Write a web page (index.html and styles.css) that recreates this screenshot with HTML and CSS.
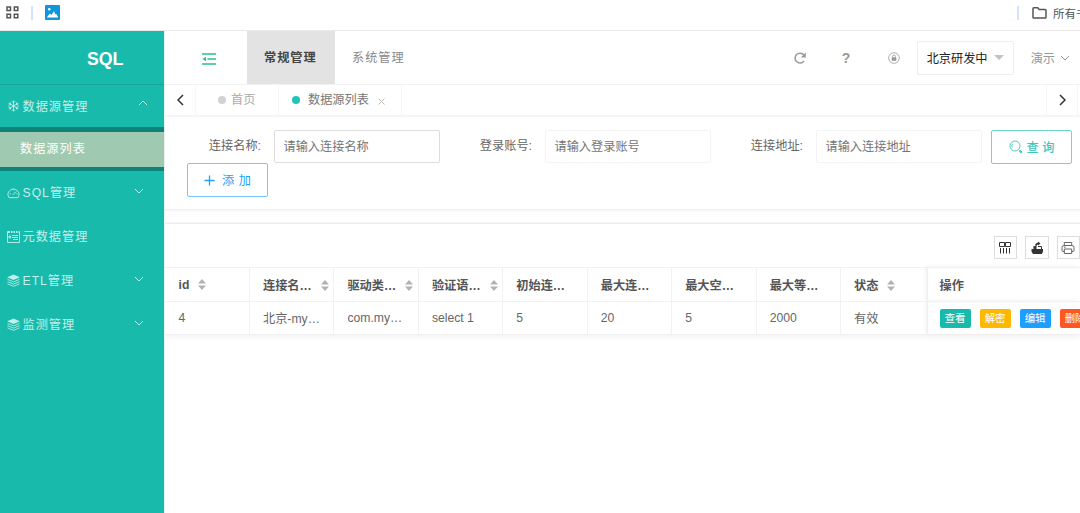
FILE: index.html
```html
<!DOCTYPE html>
<html lang="zh">
  <head>
    <meta charset="utf-8">
    <title>SQL</title>
    <link rel="stylesheet" href="styles.css">
  </head>
  <body>
    <svg class="defs" width="0" height="0">
      <symbol id="up" viewBox="0 0 10 6"><path d="M1 5l4-4 4 4"/></symbol>
      <symbol id="down" viewBox="0 0 10 6"><path d="M1 1l4 4 4-4"/></symbol>
      <symbol id="layers" viewBox="0 0 14 14"><path class="fill" d="M7 .5l6.800 3L7 6.500.2 3.500z"/><path d="M.5 5.800L7 8.500l6.500-2.700M.5 8.200L7 10.900l6.500-2.700M.5 10.600L7 13.300l6.500-2.700"/></symbol>
      <symbol id="sort" viewBox="0 0 8 11"><path class="fill" d="M0 4.500L4 0l4 4.500zM0 6.500h8L4 11z"/></symbol>
    </svg>

    <div class="bookmarks">
      <svg class="apps" width="13" height="13" viewBox="0 0 13 13"><path d="M1 1h3.500v3.500H1zM8.300 1h3.500v3.500H8.300zM1 8.300h3.500v3.500H1zM8.300 8.300h3.500v3.500H8.300z"/></svg>
      <i class="bar"></i>
      <svg class="photo" width="15" height="15" viewBox="0 0 15 15"><rect width="15" height="15" rx="1" fill="#1296db"/><path fill="#fff" d="M1.800 12.500l3-4 1.600 1.400L9 6.300l1.500 3.200 1-.5 1.700 3.500zM3 4.300a1.300 1.300 0 1 1 2.600 0a1.300 1.300 0 1 1-2.600 0"/></svg>
      <i class="bar right"></i>
      <svg class="folder" width="15" height="12" viewBox="0 0 15 12"><path d="M1 1.500q0-.7.700-.7h4l1.500 1.700h6q.8 0 .8.800v7q0 .8-.8.800H1.800q-.8 0-.8-.8z"/></svg>
      <span>所有书签</span>
    </div>

    <div class="app">
      <div class="side">
        <div class="logo">SQL</div>
        <div class="item first">
          <svg width="12" height="12" viewBox="0 0 12 12"><path d="M6 .5v11M1.200 3.200l9.600 5.600M1.200 8.800l9.600-5.600M4.300 1.200L6 2.900l1.700-1.700M4.300 10.800L6 9.100l1.700 1.700M1 5.200l2.200-.6-.5-2.200M11 5.200l-2.200-.6.500-2.200M1 6.800l2.200.6-.5 2.200M11 6.800l-2.200.6.5 2.200"/></svg>
          <span>数据源管理</span>
          <svg class="arrow" width="10" height="6"><use href="#up"/></svg>
        </div>
        <div class="sub"><div class="active">数据源列表</div></div>
        <div class="item">
          <svg width="12" height="12" viewBox="0 0 12 12"><path d="M1.600 10.700A5.400 5.400 0 1 1 10.400 10.700zM5.500 7.700l2.800-3M2.300 6.800h1M8.800 6.800h1M6 2.500v.8"/></svg>
          <span>SQL管理</span>
          <svg class="arrow" width="10" height="6"><use href="#down"/></svg>
        </div>
        <div class="item">
          <svg width="13" height="13" viewBox="0 0 13 13"><path d="M.5 1.500v11h12v-11M5 5.500h6M5 7.500h6M6 9.500h5M2 6v2h1.500V6z"/><path class="thick" d="M.5 2h2.300M4 2h1.500M6.500 2H8M9 2h1.500M11.500 2h1"/></svg>
          <span>元数据管理</span>
        </div>
        <div class="item">
          <svg width="13" height="13"><use href="#layers"/></svg>
          <span>ETL管理</span>
          <svg class="arrow" width="10" height="6"><use href="#down"/></svg>
        </div>
        <div class="item">
          <svg width="13" height="13"><use href="#layers"/></svg>
          <span>监测管理</span>
          <svg class="arrow" width="10" height="6"><use href="#down"/></svg>
        </div>
      </div>

      <div class="main">
        <div class="header">
          <svg class="fold" width="14" height="12" viewBox="0 0 14 12"><path d="M0 1h14M5.500 6H14M0 11h14"/><path class="fill" d="M.5 6L4 3.800v4.400z"/></svg>
          <div class="nav on">常规管理</div>
          <div class="nav">系统管理</div>
          <div class="tools">
            <svg class="refresh" width="12" height="12" viewBox="0 0 12 12"><path d="M10 8.800A4.900 4.900 0 1 1 9.800 3"/><path class="fill" d="M11.800.5v5H6.800z"/></svg>
            <b class="help">?</b>
            <svg class="lock" width="12" height="12" viewBox="0 0 12 12"><circle cx="6" cy="6" r="5.300"/><path d="M4.600 5.500V4.400a1.400 1.400 0 0 1 2.800 0v1.100"/><path class="fill" d="M3.700 5.200h4.600v3.600H3.700z"/></svg>
            <div class="select"><span>北京研发中</span><i></i></div>
            <span class="user">演示</span>
            <svg class="userdown" width="10" height="6"><use href="#down"/></svg>
          </div>
        </div>

        <div class="tabs">
          <div class="ctrl"><svg width="7" height="12" viewBox="0 0 7 12"><path d="M6 1L1 6l5 5"/></svg></div>
          <div class="tab home"><i></i>首页</div>
          <div class="tab cur"><i></i>数据源列表<svg width="7" height="7" viewBox="0 0 7 7"><path d="M.5.5l6 6M6.500.5l-6 6"/></svg></div>
          <div class="ctrl next"><svg width="7" height="12" viewBox="0 0 7 12"><path d="M1 1l5 5-5 5"/></svg></div>
        </div>

        <div class="card search">
          <div class="row">
            <label>连接名称:</label><input class="focus" type="text" placeholder="请输入连接名称">
            <label>登录账号:</label><input type="text" placeholder="请输入登录账号">
            <label>连接地址:</label><input type="text" placeholder="请输入连接地址">
            <button class="btn query"><svg width="14" height="14" viewBox="0 0 14 14"><circle cx="6" cy="6" r="5"/><path d="M3.400 7.500a3 3 0 0 1 .5-4M9.600 9.600l.8.800"/><path class="thick" d="M10.500 10.500l2.300 2.300"/></svg>查 询</button>
          </div>
          <button class="btn add"><svg width="11" height="11" viewBox="0 0 11 11"><path d="M5.500.5v10M.5 5.500h10"/></svg>添 加</button>
        </div>

        <div class="card list">
          <div class="toolbar">
            <div><svg width="14" height="14" viewBox="0 0 14 14"><path d="M1.500 1.500h5v4h-5zM7.500 1.500h5v4h-5zM2.500 7v5.500M5.500 7v5.500M8.500 7v5.500M11.500 7v5.500"/></svg></div>
            <div><svg width="14" height="14" viewBox="0 0 14 14"><path class="fill" d="M1.500 8h11.500v2.500l-1 2.500H3l-1.500-2.500zM3.500 8V5h3v3zM5 4q1-2.500 3-2.500V.5l2.500 2L8 4.500V3.500q-1.500 0-1.500 2z"/><path d="M8 5.500h3.500V8"/></svg></div>
            <div><svg class="print" width="14" height="14" viewBox="0 0 14 14"><path d="M3.300 4.500v-3h7.400v3M3.300 10.500H2q-1 0-1-1v-3q0-2 2-2h8q2 0 2 2v3q0 1-1 1h-1.300M3.300 8h7.400v4.500H3.300zM3 6.200h1.500"/></svg></div>
          </div>
          <table>
            <tr>
              <th class="id">id<svg class="s" width="8" height="11"><use href="#sort"/></svg></th>
              <th>连接名…<svg class="s" width="8" height="11"><use href="#sort"/></svg></th>
              <th>驱动类…<svg class="s" width="8" height="11"><use href="#sort"/></svg></th>
              <th>验证语…<svg class="s" width="8" height="11"><use href="#sort"/></svg></th>
              <th>初始连…</th>
              <th>最大连…</th>
              <th>最大空…</th>
              <th>最大等…</th>
              <th class="state">状态<svg class="s" width="8" height="11"><use href="#sort"/></svg></th>
              <th class="ops">操作</th>
            </tr>
            <tr>
              <td class="id">4</td>
              <td>北京-my…</td>
              <td>com.my…</td>
              <td>select 1</td>
              <td>5</td>
              <td>20</td>
              <td>5</td>
              <td>2000</td>
              <td>有效</td>
              <td class="ops"><div><a class="green">查看</a><a class="yellow">解密</a><a class="blue">编辑</a><a class="red">删除</a></div></td>
            </tr>
          </table>
        </div>
      </div>
    </div>
  </body>
</html>
```

FILE: styles.css
```css
* { box-sizing: border-box; }
body { margin: 0; width: 1080px; height: 513px; overflow: hidden; background: #fff; color: #666; font: 12.2px "Liberation Sans", "Noto Sans CJK SC", sans-serif; }
svg { fill: none; stroke: currentColor; flex: none; }
.fill { fill: currentColor; stroke: none; }
.defs { display: block; height: 0; }

.bookmarks { height: 31px; display: flex; align-items: center; padding: 0 0 5px 6px; border-bottom: 1px solid #e8e8e8; white-space: nowrap; overflow: hidden; color: #555; font-size: 11.5px; }
.apps { stroke-width: 1.5; }
.photo { stroke: none; }
.bar { width: 2px; height: 14px; margin: 0 12px; background: #d3e3fd; }
.bar.right { margin: 0 13px 0 auto; }
.folder { stroke-width: 1.5; margin-right: 6px; }
.bookmarks span { width: 27px; }

.app { display: flex; height: 482px; }
.side { width: 164px; flex: none; background: #18baac; color: #c3f0e9; }
.logo { height: 54px; line-height: 56px; padding-left: 87px; border-bottom: 1px solid #16a398; color: #fff; font-size: 17.7px; font-weight: bold; }
.item { height: 43.8px; display: flex; align-items: center; padding-left: 7px; letter-spacing: 1px; font-size: 12.2px; }
.item.first { height: 42px; }
.item span { margin: -1px 0 0 2.5px; }
.item > svg:first-child { width: 13px; stroke-width: .9; }
.item .arrow { margin: 0 20px 3px auto; }
.item.first .arrow { margin: 0 16px 6px auto; }
.thick { stroke-width: 2; }
.sub { background: #108378; padding: 5px 0 4px; height: 44px; }
.active { height: 35px; line-height: 35px; padding-left: 20px; background: #9fc9b0; color: #fff; letter-spacing: 1px; }

.main { flex: 1; min-width: 0; overflow: hidden; box-shadow: inset 1px 0 #e8efee; }
.header { height: 54px; display: flex; align-items: center; border-bottom: 1px solid #f3f3f3; }
.fold { margin: 2px 31px 0 38px; color: #2bc08a; stroke-width: 1.5; }
.nav { height: 53px; line-height: 55px; padding: 0 17px; letter-spacing: 1px; color: #888; }
.nav.on { background: #e3e3e3; color: #444; font-weight: bold; width: 88px; }
.tools { margin-left: auto; display: flex; align-items: center; color: #999; }
.refresh { stroke-width: 1.5; }
.help { margin: 0 37px 0 36px; font-size: 14px; width: 9px; }
.lock { stroke-width: .8; }
.select { width: 97px; height: 34px; margin: 0 17px 0 17px; padding: 0 9px; border: 1px solid #eee; border-radius: 2px; display: flex; align-items: center; justify-content: space-between; color: #222; }
.select i { border: 5px solid transparent; border-top-color: #c2c2c2; margin-top: 5px; }
.userdown { margin: 0 10px 0 5px; }

.tabs { height: 32px; display: flex; border-bottom: 2px solid #f5f5f5; line-height: 29px; }
.ctrl { width: 32px; display: flex; align-items: center; justify-content: center; padding-left: 1px; border-right: 1px solid #f6f6f6; color: #333; }
.ctrl svg { stroke-width: 1.5; }
.ctrl.next { margin-left: auto; margin-right: 2px; padding: 0; border-left: 1px solid #f6f6f6; }
.tab { display: flex; align-items: center; border-right: 1px solid #f6f6f6; color: #777; }
.tab i { width: 8px; height: 8px; border-radius: 50%; background: #1fc5b8; margin-right: 8px; }
.tab svg { margin: 3px 0 0 9px; color: #bbb; }
.home { width: 83px; padding-left: 22px; color: #aaa; }
.home i { background: #d2d2d2; margin-right: 5px; }
.cur { width: 123px; padding-left: 13px; }

.card { border-bottom: 1px solid #f0f0f0; box-shadow: 0 1px 2px #f3f3f3; }
.search { height: 93px; padding: 13px 0 0 23px; }
.row { display: flex; height: 33px; }
label { width: 87px; padding: 0 13px 0 0; line-height: 33px; text-align: right; }
label:not(:first-child) { width: 105px; }
input { width: 166px; height: 33px; border: 1px solid #f4f4f4; border-radius: 2px; padding: 0 8.5px; font: inherit; outline: none; }
input.focus { border-color: #ddd; }
input::placeholder { color: #757575; opacity: 1; }
.btn { height: 34px; width: 81px; display: flex; align-items: center; justify-content: center; border: 1px solid; border-radius: 2px; background: #fff; font: 12.2px "Liberation Sans", "Noto Sans CJK SC", sans-serif; padding: 0; }
.query { margin-left: 9px; color: #3fc7bc; border-color: #71d5cb; font-weight: 500; }
.query svg { margin-right: 4px; stroke-width: .9; }
.add { color: #1e9fff; border-color: #78c5ff; word-spacing: 1px; }
.add svg { margin-right: 7px; stroke-width: 1.3; }

.list { margin-top: 13px; height: 112px; border-top: 1px solid #ededed; box-shadow: 0 3px 5px #f5f5f5, 0 -1px 1px #f7f7f7; }
.toolbar { height: 43px; display: flex; gap: 8px; padding: 12px 0 0 829.5px; }
.toolbar div { width: 23.500px; height: 23px; flex: none; display: flex; align-items: center; justify-content: center; border: 1px solid #ddd; color: #333; }
.print { color: #666; }
table { width: 916px; table-layout: fixed; border-collapse: separate; border-spacing: 0; }
th, td { height: 33px; width: 84.450px; padding: 0 0 0 13px; text-align: left; white-space: nowrap; border: solid #f2f2f2; border-width: 1px 1px 0 0; }
th { font-weight: bold; color: #555; height: 34px; padding-top: 1px; }
th .s { margin: 0 0 -1px 9px; color: #b2b2b2; }
.id { width: 86px; padding-left: 14.5px; }
.state { width: 86.5px; }
.ops { width: 152.4px; padding-left: 12px; border-right: 0; overflow: hidden; box-shadow: -2px 0 4px #eee; }
.ops div { display: flex; gap: 9px; }
.ops a { flex: none; width: 31px; height: 19px; line-height: 19px; border-radius: 2px; text-align: center; color: #fff; font-size: 10.400px; }
.green { background: #18baac; }
.yellow { background: #ffb800; }
.blue { background: #1e9fff; }
.red { background: #ff5722; }
```
